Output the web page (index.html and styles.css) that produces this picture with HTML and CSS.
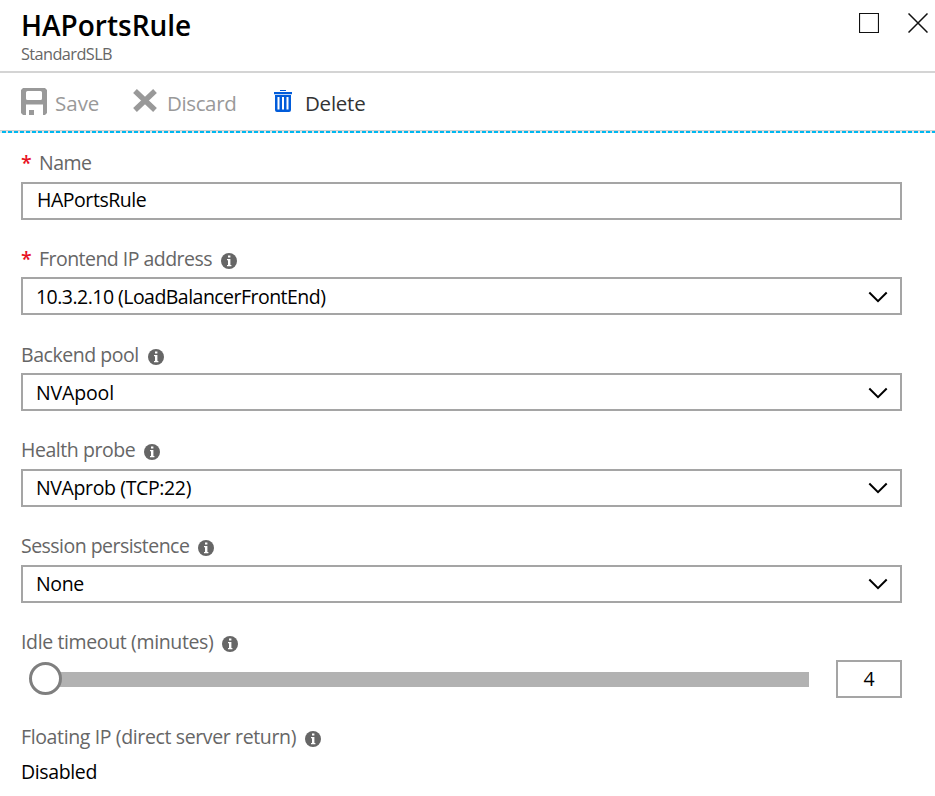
FILE: index.html
```html
<!DOCTYPE html>
<html lang="en">
<head>
<meta charset="utf-8">
<title>HAPortsRule</title>
<link rel="stylesheet" href="styles.css">
</head>
<body>
<svg class="defs" aria-hidden="true">
  <symbol id="info" viewBox="0 0 16 16"><circle cx="8" cy="8" r="8" fill="#666"/><path d="M7 2.600h2.400v2H7zM6 6h3.400v6h1v1.300H6V12h1V7.300H6z" fill="#fff"/></symbol>
  <symbol id="chevron" viewBox="0 0 20 12"><path d="M1.300 1.500 10 10.200l8.700-8.700" fill="none" stroke="#000" stroke-width="2"/></symbol>
</svg>
<header class="header">
  <div class="heading">
    <h1 class="title">HAPortsRule</h1>
    <div class="subtitle">StandardSLB</div>
  </div>
  <div class="window-actions">
    <svg width="20" height="20" viewBox="0 0 20 20"><path d="M.500.500h19v19H.500z" fill="none" stroke="#111" stroke-width="1.200"/></svg>
    <svg width="20" height="20" viewBox="0 0 20 20"><path d="m.500.500 19 19m0-19-19 19" stroke="#111" stroke-width="1.500"/></svg>
  </div>
</header>
<nav class="toolbar">
  <button class="command save">
    <svg width="26" height="27" viewBox="0 0 26 27"><path fill="#999" fill-rule="evenodd" d="M2 0h22l2 2v23l-2 2h-2V16.500H5V27H2l-2-2V2zM5 4.500v6q0 1.500 1.500 1.500h13q1.500 0 1.500-1.500v-6q0-1.500-1.500-1.500h-13q-1.500 0-1.500 1.500zM8 22h5v5H8z"/></svg>
    <span>Save</span>
  </button>
  <button class="command discard">
    <svg width="24" height="23" viewBox="0 0 24 23"><path d="m2 2 20 19m0-19L2 21" stroke="#999" stroke-width="5.400"/></svg>
    <span>Discard</span>
  </button>
  <button class="command delete">
    <svg width="18" height="22" viewBox="0 0 18 22"><path fill="#015cda" d="M6 0h6v1H6zM0 2h18v2.300H0zM1 5h16v15q0 2-2 2H3q-2 0-2-2z"/><path fill="#fff" d="M3.500 7h2v12.500h-2zM8 7h2v12.500H8zM12.500 7h2v12.500h-2z"/></svg>
    <span>Delete</span>
  </button>
</nav>
<main class="form">
  <section class="field short">
    <div class="label"><b class="required">*</b><span class="tightest">Name</span></div>
    <div class="box input"><span class="tighter">HAPortsRule</span></div>
  </section>
  <section class="field low">
    <div class="label"><b class="required">*</b><span class="tightest">Frontend IP address</span><svg class="info"><use href="#info"/></svg></div>
    <div class="box"><span class="tightest">10.3.2.10 (LoadBalancerFrontEnd)</span><svg class="chevron"><use href="#chevron"/></svg></div>
  </section>
  <section class="field low">
    <div class="label"><span class="tighter">Backend pool</span><svg class="info"><use href="#info"/></svg></div>
    <div class="box"><span class="loose">NVApool</span><svg class="chevron"><use href="#chevron"/></svg></div>
  </section>
  <section class="field">
    <div class="label"><span class="tighter">Health probe</span><svg class="info"><use href="#info"/></svg></div>
    <div class="box"><span>NVAprob (TCP:22)</span><svg class="chevron"><use href="#chevron"/></svg></div>
  </section>
  <section class="field short">
    <div class="label"><span class="tightest">Session persistence</span><svg class="info"><use href="#info"/></svg></div>
    <div class="box"><span>None</span><svg class="chevron"><use href="#chevron"/></svg></div>
  </section>
  <section class="field low">
    <div class="label"><span>Idle timeout (minutes)</span><svg class="info"><use href="#info"/></svg></div>
    <div class="slider-row">
      <div class="slider"><div class="track"></div><div class="thumb"></div></div>
      <div class="box number">4</div>
    </div>
  </section>
  <section class="field">
    <div class="label"><span>Floating IP (direct server return)</span><svg class="info"><use href="#info"/></svg></div>
    <div class="static"><span>Disabled</span></div>
  </section>
</main>
</body>
</html>
```
FILE: styles.css
```css
* { box-sizing: border-box; }
body { margin: 0; height: 796px; overflow: hidden; background: #fff; color: #000; font: 19.5px/26px "Open Sans", "Noto Sans", sans-serif; }
.defs { display: none; }
svg { display: block; flex: none; }
span { white-space: nowrap; }
.header { height: 73px; border-bottom: 2px solid #d4d4d4; padding: 7px 7px 0 21px; display: flex; justify-content: space-between; }
.title { margin: 0; font-size: 28px; line-height: 37px; font-weight: 600; }
.subtitle { font-size: 16.3px; line-height: 20px; color: #666; letter-spacing: -0.57px; }
.window-actions { display: flex; gap: 29px; padding-top: 6px; }
.toolbar {
  height: 60px;
  padding: 15px 21px 0;
  display: flex;
  align-items: flex-start;
  background:
    repeating-linear-gradient(90deg, #e6e6e6 0 2px, #00b8f0 2px 6px) left bottom / 100% 2px no-repeat,
    linear-gradient(#cfcfcf, #cfcfcf) left 0 bottom 2px / 100% 1px no-repeat;
}
.command { border: 0; padding: 0; background: none; font: inherit; font-size: 20.5px; line-height: 30px; color: #999; display: flex; }
.save { gap: 8px; width: 112px; }
.discard { gap: 10px; width: 141px; letter-spacing: -0.38px; }
.discard svg { margin-top: 1px; }
.delete svg { margin-top: 2px; }
.delete { gap: 13px; color: #333; letter-spacing: -0.25px; }
.form { padding: 17px 33px 0 21px; }
.field { height: 96px; letter-spacing: -0.37px; }
.short { height: 95px; }
.label { height: 32px; display: flex; align-items: flex-start; color: #666; }
.low .label { padding-top: 1px; }
.required { width: 18px; color: #e81123; font-weight: 600; }
.tighter { letter-spacing: -0.45px; }
.tightest { letter-spacing: -0.53px; }
.loose { letter-spacing: -0.14px; }
.info { width: 16px; height: 16px; margin: 7px 0 0 9px; }
.box { height: 38px; border: 2px solid #a5a5a5; padding: 0 12px 0 13px; display: flex; align-items: center; justify-content: space-between; }
.low .box:not(.number) { padding-top: 2px; }
.input { padding: 0 14px 2px; }
.chevron { width: 20px; height: 12px; }
.slider-row { display: flex; justify-content: space-between; }
.slider { position: relative; width: 772px; margin-left: 16px; padding-top: 12px; }
.thumb { position: absolute; top: 2px; left: -8px; width: 33px; height: 33px; border: 3px solid #7f7f7f; border-radius: 50%; background: #fff; }
.track { height: 15px; background: #b2b2b2; }
.number { width: 66px; padding: 0; justify-content: center; }
.static { padding-top: 3px; }
```
